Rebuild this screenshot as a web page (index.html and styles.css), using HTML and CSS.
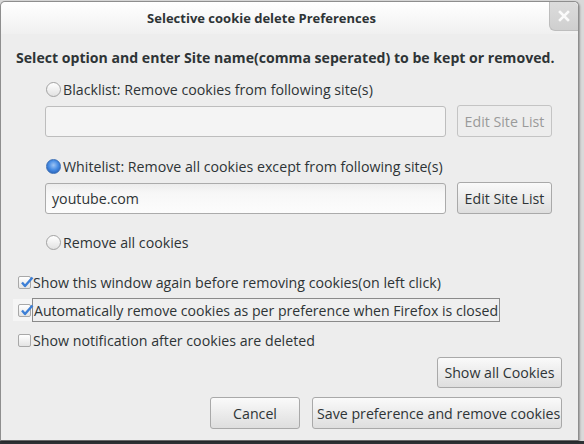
FILE: index.html
```html
<!DOCTYPE html>
<html>
<head>
<meta charset="utf-8">
<link rel="stylesheet" href="styles.css">
</head>
<body>
<div class="window">
  <div class="titlebar">
    <span class="title">Selective cookie delete Preferences</span>
    <div class="close"><svg width="12" height="12" viewBox="0 0 12 12"><path d="M2 2 L10 10 M10 2 L2 10" stroke="#fafafa" stroke-width="2.6" stroke-linecap="square"/></svg></div>
  </div>
  <div class="content">
    <div class="heading">Select option and enter Site name(comma seperated) to be kept or removed.</div>
    <div class="group">
      <div class="radio-row r1"><span class="radio"></span><span>Blacklist: Remove cookies from following site(s)</span></div>
      <div class="input-row"><div class="input disabled"></div><button class="btn disabled-btn">Edit Site List</button></div>
      <div class="radio-row r2"><span class="radio checked"></span><span>Whitelist: Remove all cookies except from following site(s)</span></div>
      <div class="input-row"><div class="input">youtube.com</div><button class="btn">Edit Site List</button></div>
      <div class="radio-row r3"><span class="radio"></span><span>Remove all cookies</span></div>
    </div>
    <div class="check-row c1"><span class="check on"><svg width="14" height="12" viewBox="0 0 14 12"><path d="M2 6.5 L5 10 L12.5 1.5" fill="none" stroke="#3d7fd6" stroke-width="2.4" stroke-linejoin="round"/></svg></span><span>Show this window again before removing cookies(on left click)</span></div>
    <div class="check-row c2"><span class="hover"><span class="check on"><svg width="14" height="12" viewBox="0 0 14 12"><path d="M2 6.5 L5 10 L12.5 1.5" fill="none" stroke="#3d7fd6" stroke-width="2.4" stroke-linejoin="round"/></svg></span></span><span class="focus">Automatically remove cookies as per preference when Firefox is closed</span></div>
    <div class="check-row c3"><span class="check"></span><span>Show notification after cookies are deleted</span></div>
    <div class="btn-row r-show"><button class="btn show-all">Show all Cookies</button></div>
    <div class="btn-row r-bottom"><button class="btn cancel">Cancel</button><button class="btn save">Save preference and remove cookies</button></div>
  </div>
</div>
</body>
</html>
```
FILE: styles.css
```css
html, body {
  margin: 0;
  padding: 0;
}
body {
  width: 584px;
  height: 444px;
  overflow: hidden;
  background: linear-gradient(to bottom, #d9d9d9 0, #d9d9d9 441px, #2f3336 441px);
  font-family: "Open Sans", "DejaVu Sans", sans-serif;
  font-size: 14.2px;
  color: #2e3436;
}
.window {
  position: relative;
  margin: 1px 0 0 0;
  width: 579px;
  height: 440px;
  border: 1px solid #8e8e8e;
  border-bottom: 1px solid #6a6a6a;
  border-radius: 5px 5px 0 0;
  background: #ededed;
  box-sizing: border-box;
  box-shadow: 1px 1px 2px rgba(0,0,0,0.3);
}
.titlebar {
  height: 32px;
  display: flex;
  align-items: center;
  justify-content: center;
  padding-right: 56px;
  background: linear-gradient(to bottom, #ffffff, #f0f0f0);
  border-radius: 5px 5px 0 0;
}
.title {
  font-weight: bold;
  font-size: 13px;
  color: #2e3436;
}
.close {
  position: absolute;
  right: 0;
  top: 0;
  width: 28px;
  height: 28px;
  display: flex;
  align-items: center;
  justify-content: center;
  background: linear-gradient(to bottom, #dcdcdc, #cfcfcf);
  border-left: 1px solid #bdbdbd;
  border-bottom: 1px solid #bdbdbd;
  border-radius: 0 5px 0 6px;
}
.heading {
  height: 24px;
  margin-top: 11px;
  padding-left: 15px;
  display: flex;
  align-items: center;
  font-weight: bold;
  font-size: 14.1px;
  white-space: nowrap;
}
.group {
  padding-left: 44px;
}
.radio-row {
  height: 18px;
  display: flex;
  align-items: center;
  gap: 2px;
  white-space: nowrap;
}
.r1 { margin-top: 11px; }
.r2 { margin-top: 20px; }
.r3 { margin-top: 19px; }
.radio {
  width: 13px;
  height: 13px;
  margin-left: 1px;
  border-radius: 50%;
  border: 1px solid #a2a2a2;
  background: linear-gradient(to bottom, #ffffff, #e2e2e2);
  box-sizing: content-box;
  flex: none;
}
.radio.checked {
  border-color: #3b6fb6;
  background: radial-gradient(circle at 50% 40%, #9ec4f4 0, #4a8ee4 45%, #2f6cc4 75%);
}
.input-row {
  margin-top: 7px;
  height: 32px;
  display: flex;
  align-items: center;
  gap: 11px;
}
.input {
  width: 401px;
  height: 31px;
  box-sizing: border-box;
  border: 1px solid #ababab;
  border-radius: 3px;
  background: linear-gradient(to bottom, #ececec, #f7f7f7 30%, #fcfcfc);
  display: flex;
  align-items: center;
  padding-left: 6px;
}
.input.disabled {
  background: #f4f4f4;
  border-color: #bdbdbd;
}
.btn {
  font-family: inherit;
  font-size: 14.2px;
  color: #2e3436;
  height: 32px;
  box-sizing: border-box;
  border: 1px solid #a9a9a9;
  border-radius: 3px;
  background: linear-gradient(to bottom, #fafafa, #dedede);
  padding: 0 4px;
  margin: 0;
  white-space: nowrap;
}
.input-row .btn {
  width: 95px;
}
.disabled-btn {
  color: #9a9a9a;
  background: #ededed;
  border-color: #c4c4c4;
}
.check-row {
  height: 20px;
  display: flex;
  align-items: center;
  padding-left: 17px;
  white-space: nowrap;
}
.c1 { margin-top: 21px; }
.c2 { margin-top: 6px; height: 24px; padding-left: 12px; }
.c3 { margin-top: 8px; }
.hover {
  height: 22px;
  padding-left: 5px;
  display: flex;
  align-items: center;
  background: #f5f5f5;
}
.check {
  position: relative;
  width: 11px;
  height: 11px;
  border: 1px solid #a8a8a8;
  border-radius: 2px;
  background: linear-gradient(to bottom, #ffffff, #e4e4e4);
  margin-right: 2px;
  flex: none;
}
.hover .check { margin-right: 1px; }
.check svg {
  position: absolute;
  left: 1px;
  top: -1px;
}
.focus {
  border: 1px solid #8a8a8a;
  height: 24px;
  box-sizing: border-box;
  display: flex;
  align-items: center;
  padding: 0 1px 0 1px;
  font-size: 14.1px;
  background: #efefef;
}
.btn-row {
  display: flex;
  justify-content: flex-end;
  padding-right: 16px;
  gap: 12px;
}
.r-show { margin-top: 7px; }
.r-show .btn { height: 31px; width: 125px; }
.r-bottom { margin-top: 9px; }
.r-bottom .btn { height: 32px; }
.cancel { width: 90px; }
.save { width: 250px; }
```
